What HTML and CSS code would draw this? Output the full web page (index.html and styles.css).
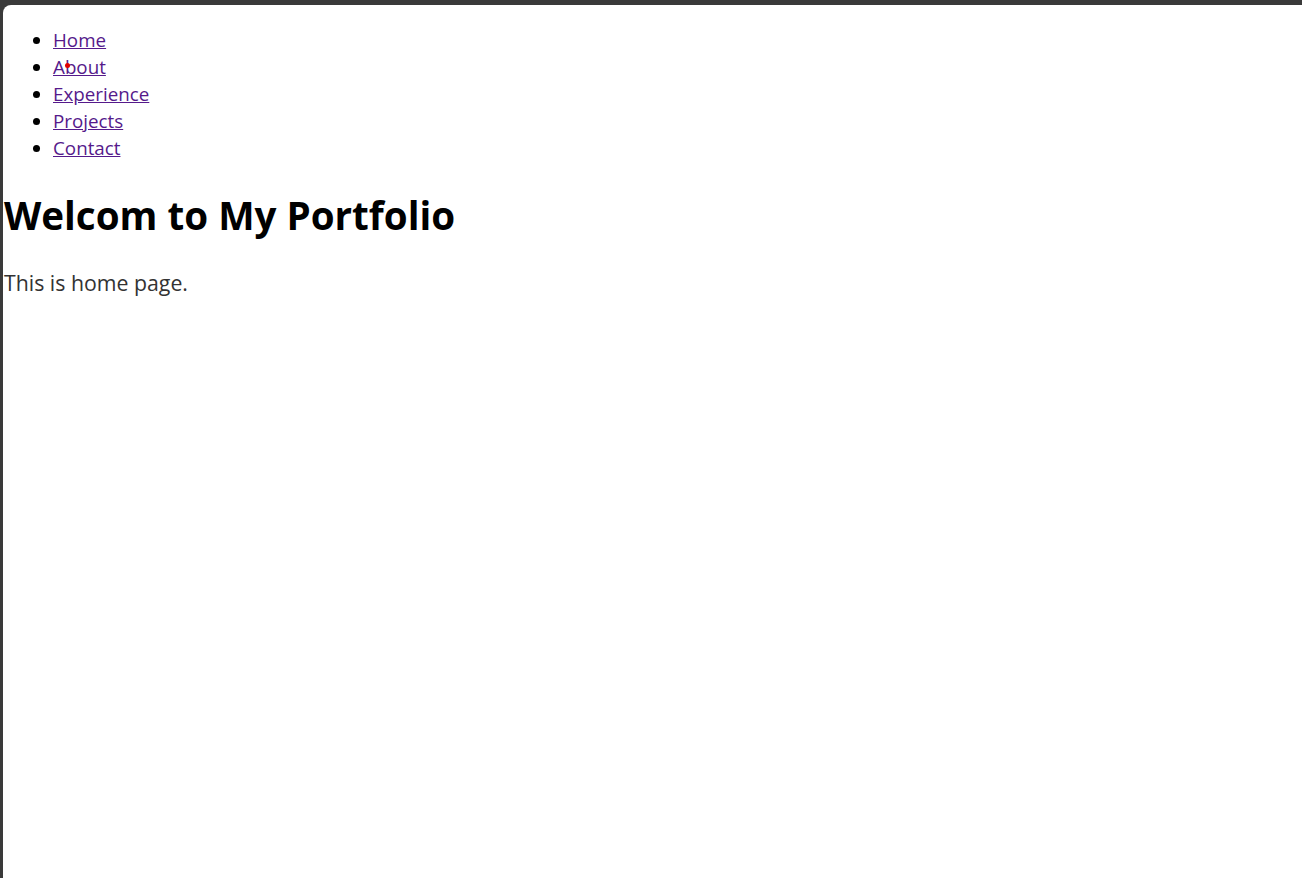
FILE: index.html
```html
<!DOCTYPE html>
<html lang="en">
<head>
<meta charset="utf-8">
<title>Portfolio</title>
<link rel="stylesheet" href="styles.css">
</head>
<body>
<div class="window">
  <nav class="nav">
    <ul class="nav-list">
      <li><a class="nav-link" href="#home">Home</a></li>
      <li class="cursor-item"><a class="nav-link" href="#about">About</a><span class="cursor-dot"></span></li>
      <li><a class="nav-link" href="#experience">Experience</a></li>
      <li><a class="nav-link" href="#projects">Projects</a></li>
      <li><a class="nav-link" href="#contact">Contact</a></li>
    </ul>
  </nav>
  <h1 class="title">Welcom to My Portfolio</h1>
  <p class="intro">This is home page.</p>
</div>
</body>
</html>
```
FILE: styles.css
```css
html, body {
  margin: 0;
  padding: 0;
  height: 100%;
}
body {
  background: #3a3a3a;
  padding: 5px 0 0 3px;
  box-sizing: border-box;
  overflow: hidden;
}
.window {
  background: #ffffff;
  height: 100%;
  border-top-left-radius: 8px;
  font-family: "Open Sans", "Noto Sans", sans-serif;
  font-size: 18.8px;
  color: #000;
  overflow: hidden;
  display: flow-root;
}
.nav-list {
  margin: 22px 0 21px;
  padding-left: 50px;
  line-height: 27px;
}
.cursor-item {
  position: relative;
}
.nav-link {
  color: #551a8b;
}
.cursor-dot {
  position: absolute;
  left: 12px;
  top: 9px;
  width: 5px;
  height: 5px;
  border-radius: 50%;
  background: #e00000;
}
.title {
  font-size: 38.6px;
  font-weight: 700;
  line-height: 53px;
  margin: 27px 0;
  padding-left: 1px;
}
.intro {
  font-size: 21.3px;
  color: #333333;
  margin: 27px 0;
  line-height: 28px;
  padding-left: 1px;
}
```
